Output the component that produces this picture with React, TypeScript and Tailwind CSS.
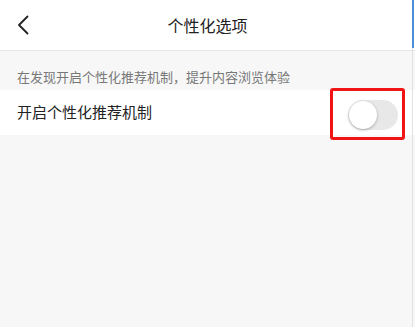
import { useState } from "react";

function BackIcon() {
  return (
    <svg width="12" height="20" viewBox="0 0 12 20" fill="none">
      <path d="M10.5 1.5L2 10l8.5 8.5" stroke="#222" strokeWidth="1.8" strokeLinecap="round" strokeLinejoin="round" />
    </svg>
  );
}

export default function App() {
  const [on, setOn] = useState(false);

  return (
    <div
      className="relative min-h-[327px] w-[415px] bg-[#f7f7f7]"
      style={{ fontFamily: '"Noto Sans CJK SC", "Noto Sans", sans-serif' }}
    >
      {/* header */}
      <header className="grid h-[51px] grid-cols-[1fr_auto_1fr] items-center border-b border-[#e6e6e6] bg-white px-[17px]">
        <button className="flex items-center justify-self-start">
          <BackIcon />
        </button>
        <h1 className="text-[16px] leading-none text-[#222]">个性化选项</h1>
        <div />
      </header>

      <p className="px-[17px] pt-[18px] pb-[6px] text-[13px] leading-[15px] text-[#777]">
        在发现开启个性化推荐机制，提升内容浏览体验
      </p>

      <div className="flex h-[45px] items-center justify-between bg-white pl-[17px] pr-[10px]">
        <span className="text-[15px] text-[#222]">开启个性化推荐机制</span>
        <div className="mt-[3px] rounded-[3px] border-[3px] border-[#f01414] pt-[9px] pb-[7px] pl-[15px] pr-[4px]">
          <button
            onClick={() => setOn(!on)}
            className={`relative block h-[30px] w-[50px] rounded-full ${on ? "bg-[#4cd964]" : "bg-[#e8e8e8]"}`}
          >
            <span
              className={`absolute top-[1px] h-[28px] w-[28px] rounded-full bg-white shadow-[0_1px_3px_rgba(0,0,0,0.3)] ${on ? "left-[21px]" : "left-[1px]"}`}
            />
          </button>
        </div>
      </div>

      {/* scrollbar edge */}
      <div className="absolute right-[1px] top-0 h-[48px] w-[2px] bg-[#4a90d9]" />
      <div className="absolute right-[2px] top-[48px] bottom-0 w-[1px] bg-[#e2e2e2]" />
    </div>
  );
}
